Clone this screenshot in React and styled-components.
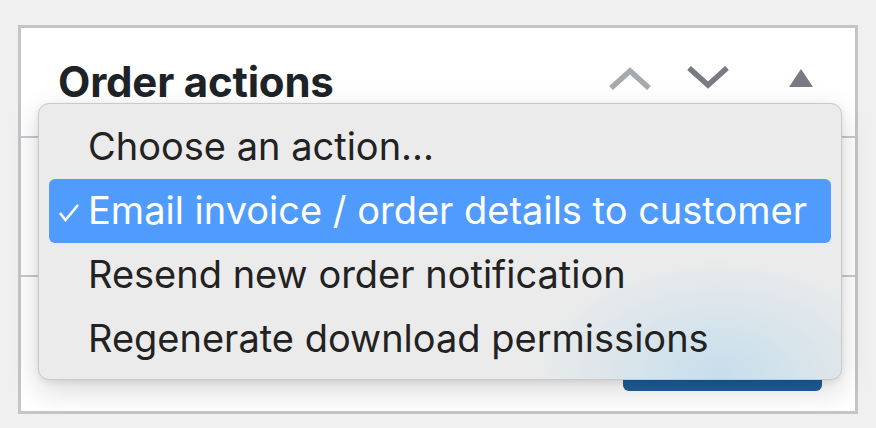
import React from "react";
import styled, { createGlobalStyle } from "styled-components";

const GlobalStyle = createGlobalStyle`
  html, body {
    margin: 0;
    padding: 0;
    background: #f0f0f1;
  }
  body {
    font-family: Inter, "Liberation Sans", sans-serif;
  }
`;

const Panel = styled.div`
  position: relative;
  box-sizing: border-box;
  width: 840px;
  height: 389px;
  margin: 25px 0 0 18px;
  background: #fff;
  border: 3px solid #c4c5c8;
  display: flex;
  flex-direction: column;
`;

const Header = styled.div`
  display: flex;
  align-items: center;
  height: 108px;
  padding-left: 37px;
  border-bottom: 2px solid #c8c9cc;
`;

const Title = styled.h2`
  flex: 1;
  margin: 0;
  padding-bottom: 2px;
  font-size: 42px;
  font-weight: 700;
  letter-spacing: -0.2px;
  color: #1d2327;
`;

const IconButton = styled.button`
  width: ${(p) => p.w}px;
  height: 60px;
  padding: 0;
  border: 0;
  background: none;
  display: flex;
  align-items: center;
  justify-content: center;
  color: ${(p) => p.tone};
  padding-bottom: 8px;
`;

const Section = styled.div`
  height: 137px;
  border-bottom: 2px solid #c8c9cc;
`;

const Footer = styled.div`
  flex: 1;
  display: flex;
  justify-content: flex-end;
  align-items: flex-end;
  padding: 0 33px 20px 0;
`;

const PrimaryButton = styled.button`
  width: 199px;
  height: 60px;
  border: 0;
  border-radius: 6px;
  background: #1e5f9a;
`;

const Menu = styled.ul`
  position: absolute;
  left: 17px;
  top: 75px;
  box-sizing: border-box;
  width: 804px;
  height: 277px;
  margin: 0;
  padding: 11px 10px 10px;
  list-style: none;
  border: 1px solid #c9c9c9;
  border-radius: 11px;
  background:
    radial-gradient(ellipse 190px 120px at 680px 272px, #c6deeb 0%, rgba(235, 235, 235, 0) 100%),
    #ebebeb;
  box-shadow: 0 10px 30px rgba(0, 0, 0, 0.16), 0 2px 6px rgba(0, 0, 0, 0.08);
`;

const Item = styled.li`
  position: relative;
  height: 64px;
  line-height: 62px;
  padding-left: 39px;
  border-radius: 6px;
  font-size: 38px;
  color: ${(p) => (p.selected ? "#fff" : "#222")};
  background: ${(p) => (p.selected ? "#509cfe" : "transparent")};
  white-space: nowrap;
`;

const Check = styled.svg`
  position: absolute;
  left: 9px;
  top: 24px;
`;

const Chevron = ({ up }) => (
  <svg width="42" height="24" viewBox="0 0 42 24">
    <polyline
      points={up ? "2,22 21,5 40,22" : "2,2 21,19 40,2"}
      fill="none"
      stroke="currentColor"
      strokeWidth="5.5"
    />
  </svg>
);

const options = [
  "Choose an action...",
  "Email invoice / order details to customer",
  "Resend new order notification",
  "Regenerate download permissions",
];

export default function App() {
  return (
    <>
      <GlobalStyle />
      <Panel>
        <Header>
          <Title>Order actions</Title>
          <IconButton w={78} tone="#a7aaad">
            <Chevron up />
          </IconButton>
          <IconButton w={78} tone="#787c82">
            <Chevron />
          </IconButton>
          <IconButton w={108} tone="#787c82">
            <svg width="24" height="18" viewBox="0 0 24 18">
              <polygon points="12,0 24,18 0,18" fill="currentColor" />
            </svg>
          </IconButton>
        </Header>
        <Section />
        <Footer>
          <PrimaryButton />
        </Footer>
        <Menu>
          {options.map((label, i) => (
            <Item key={label} selected={i === 1}>
              {i === 1 && (
                <Check width="22" height="20" viewBox="0 0 22 20">
                  <polyline
                    points="2,10 7.5,17 20,2"
                    fill="none"
                    stroke="#fff"
                    strokeWidth="2.6"
                  />
                </Check>
              )}
              {label}
            </Item>
          ))}
        </Menu>
      </Panel>
    </>
  );
}
